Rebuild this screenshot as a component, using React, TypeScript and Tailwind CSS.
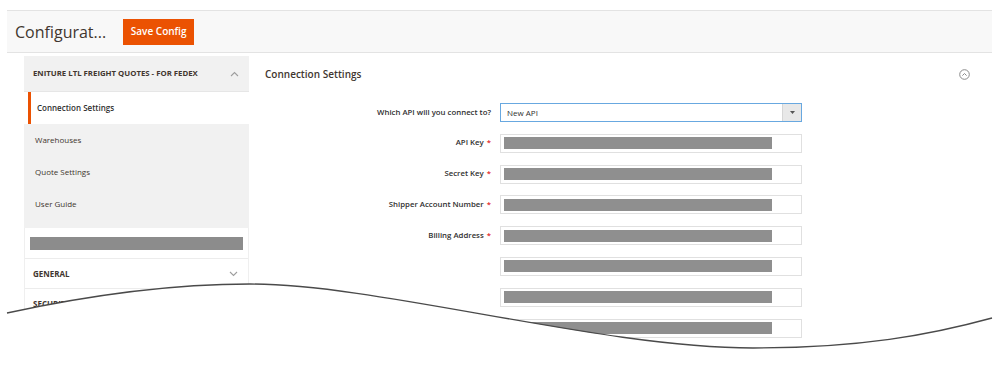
const font = { fontFamily: '"Open Sans", "Liberation Sans", sans-serif' };

type Field = { label: string; required?: boolean };

const fields: Field[] = [
  { label: "API Key", required: true },
  { label: "Secret Key", required: true },
  { label: "Shipper Account Number", required: true },
  { label: "Billing Address", required: true },
  { label: "" },
  { label: "" },
  { label: "" },
  { label: "" },
];

function Chevron({ up }: { up?: boolean }) {
  return (
    <svg width="9" height="6" viewBox="0 0 9 6" className="text-[#9e9e9e]">
      <polyline
        points={up ? "1,5 4.5,1.5 8,5" : "1,1 4.5,4.5 8,1"}
        fill="none"
        stroke="currentColor"
        strokeWidth="1.1"
      />
    </svg>
  );
}

function Sidebar() {
  return (
    <aside className="w-[225px] shrink-0">
      <div className="flex h-[36px] items-center justify-between bg-[#f1f1f1] pl-[9px] pr-[10px] border-b border-[#e6e6e6]">
        <span className="text-[7.8px] font-bold uppercase text-[#41362f]">
          Eniture LTL Freight Quotes - for FedEx
        </span>
        <Chevron up />
      </div>
      <div className="flex h-[32px] items-center bg-white pl-[4px]">
        <div className="flex h-full items-center border-l-[3px] border-[#eb5202] pl-[6px] text-[8px] font-semibold text-[#303030]">
          Connection Settings
        </div>
      </div>
      <div className="bg-[#f1f1f1]">
        {["Warehouses", "Quote Settings", "User Guide"].map((item) => (
          <div key={item} className="flex h-[32px] items-center pl-[11px] text-[8px] text-[#41362f]">
            {item}
          </div>
        ))}
        <div className="h-[8px]" />
      </div>
      <div className="border-x border-[#efefef] bg-white">
        <div className="flex h-[30px] items-center px-[5px]">
          <div className="h-[13px] w-full bg-[#8c8c8c]" />
        </div>
        <div className="flex h-[30px] items-center justify-between border-t border-[#ececec] pl-[8px] pr-[10px]">
          <span className="text-[8px] font-bold uppercase text-[#41362f]">General</span>
          <Chevron />
        </div>
        <div className="flex h-[30px] items-center justify-between border-t border-[#ececec] pl-[8px] pr-[10px]">
          <span className="text-[8px] font-bold uppercase text-[#41362f]">Security</span>
          <Chevron />
        </div>
      </div>
    </aside>
  );
}

function Label({ text, required }: { text: string; required?: boolean }) {
  return (
    <div className="w-[242px] shrink-0 text-right text-[7.8px] font-semibold text-[#303030]">
      {text}
      {required ? <span className="ml-[3px] text-[#e22626]">*</span> : null}
    </div>
  );
}

function Main() {
  return (
    <section className="flex-1 pt-[11px]">
      <div className="flex items-center justify-between pl-[16px] pr-[22px]">
        <h2 className="text-[10px] font-semibold text-[#41362f]">Connection Settings</h2>
        <svg width="11" height="11" viewBox="0 0 11 11" className="text-[#8a8a8a]">
          <circle cx="5.5" cy="5.5" r="4.8" fill="none" stroke="currentColor" strokeWidth="1" />
          <polyline points="3.4,6.6 5.5,4.5 7.6,6.6" fill="none" stroke="currentColor" strokeWidth="1" />
        </svg>
      </div>
      <div className="mt-[21px] flex flex-col gap-[11.8px]">
        <div className="flex items-center gap-[9px]">
          <Label text="Which API will you connect to?" />
          <div className="flex h-[19px] w-[302px] items-stretch border border-[#68a8e0] bg-white">
            <span className="flex flex-1 items-center pl-[6px] text-[8px] text-[#303030]">New API</span>
            <span className="flex w-[19px] items-center justify-center border-l border-[#d6d6d6] bg-[#e8e8e8]">
              <svg width="5" height="3" viewBox="0 0 5 3">
                <polygon points="0,0 5,0 2.5,3" fill="#555" />
              </svg>
            </span>
          </div>
        </div>
        {fields.map((f, i) => (
          <div key={i} className="flex items-center gap-[9px]">
            <Label text={f.label} required={f.required} />
            <div className="flex h-[19px] w-[302px] items-center border border-[#e0e0e0] bg-white pl-[3px]">
              <div className="h-[12px] w-[268px] bg-[#8f8f8f]" />
            </div>
          </div>
        ))}
      </div>
    </section>
  );
}

export default function App() {
  return (
    <div className="relative h-[375px] w-[1000px] overflow-hidden bg-white" style={font}>
      <div className="ml-[7px] w-[985px] pt-[10px]">
        <header className="flex h-[43px] items-center border-y border-[#e3e3e3] bg-[#f8f8f8] pl-[8px]">
          <h1 className="text-[16px] font-normal text-[#41362f]">Configurat...</h1>
          <button
            type="button"
            className="ml-[17px] h-[26px] w-[71px] bg-[#eb5202] text-[10px] font-semibold text-white"
          >
            Save Config
          </button>
        </header>
        <div className="flex pl-[17px] pt-[3px]">
          <Sidebar />
          <Main />
        </div>
      </div>
      <svg className="absolute left-0 top-0" width="1000" height="375" viewBox="0 0 1000 375">
        <path
          d="M0 313 L7 313 C90 295 170 284 250 284 C380 284 600 348 753 348 C860 348 930 335 992 318 L1000 318 L1000 375 L0 375 Z"
          fill="#fff"
        />
        <path
          d="M7 313 C90 295 170 284 250 284 C380 284 600 348 753 348 C860 348 930 335 992 318"
          fill="none"
          stroke="#4a4a4a"
          strokeWidth="1.3"
        />
      </svg>
    </div>
  );
}
